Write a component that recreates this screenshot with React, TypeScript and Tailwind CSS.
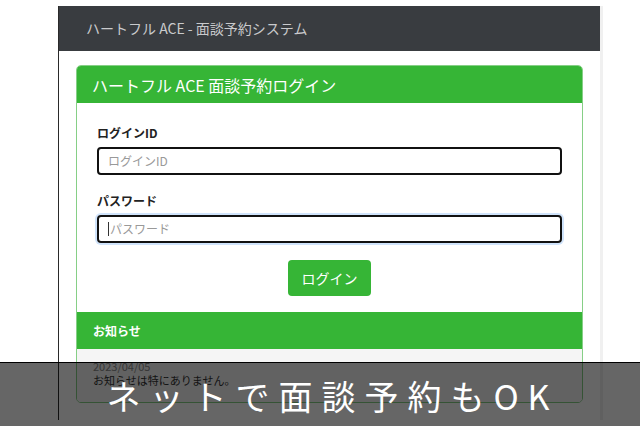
import React from "react";

export default function App() {
  const font = { fontFamily: '"Noto Sans CJK JP", "Noto Sans", sans-serif' };
  return (
    <div className="relative w-[640px] h-[426px] overflow-hidden bg-white" style={font}>
      <div className="ml-[58px] mt-[6px] w-[545px] h-[414px] flex flex-col border-l border-l-[#2a2a2a] border-r-[3px] border-r-[#f0f0f0]">
        <div className="h-[45px] bg-[#393c40] flex items-center pl-[27px] text-[14px] text-[#c9cacc]">
          ハートフル ACE - 面談予約システム
        </div>
        <div className="pl-[17px] pt-[14px]">
          <div className="w-[507px] rounded-[5px] border border-[#86cf86] overflow-hidden">
            <div className="h-[37px] bg-[#36b536] flex items-center pl-[15px] text-[16px] text-white">
              ハートフル ACE 面談予約ログイン
            </div>
            <div className="px-[20px] pt-[21px] pb-[16px] bg-white">
              <div className="text-[12px] font-bold text-[#222] leading-[18px]">ログインID</div>
              <div className="mt-[5px] h-[28px] rounded-[4px] border-2 border-[#111] flex items-center pl-[9px] text-[12px] text-[#999]">
                ログインID
              </div>
              <div className="mt-[17px] text-[12px] font-bold text-[#222] leading-[18px]">パスワード</div>
              <div className="mt-[5px] h-[28px] rounded-[4px] border-2 border-[#111] shadow-[0_0_0_2px_#cfe3fb] flex items-center pl-[9px] text-[12px] text-[#999]">
                <span className="w-px h-[14px] bg-[#333] mr-px"></span>パスワード
              </div>
              <div className="mt-[17px] flex justify-center">
                <div className="w-[83px] h-[36px] rounded-[4px] bg-[#36b536] flex items-center justify-center text-[14px] text-white">
                  ログイン
                </div>
              </div>
            </div>
            <div className="h-[37px] bg-[#36b536] flex items-center pl-[16px] text-[12px] font-bold text-white">
              お知らせ
            </div>
            <div className="h-[53px] bg-[#f5f5f5] pl-[16px] pt-[10px] text-[11px] leading-[14px]">
              <div className="text-[#888]">2023/04/05</div>
              <div className="text-[#333]">お知らせは特にありません。</div>
            </div>
          </div>
        </div>
      </div>
      <div className="absolute left-0 right-0 top-[362px] bottom-0 bg-black/60 border-t border-black flex items-center justify-center">
        <span className="text-white text-[34px] tracking-[9px] pl-[25px] leading-none mt-[2px]">ネットで面談予約もOK</span>
      </div>
    </div>
  );
}
